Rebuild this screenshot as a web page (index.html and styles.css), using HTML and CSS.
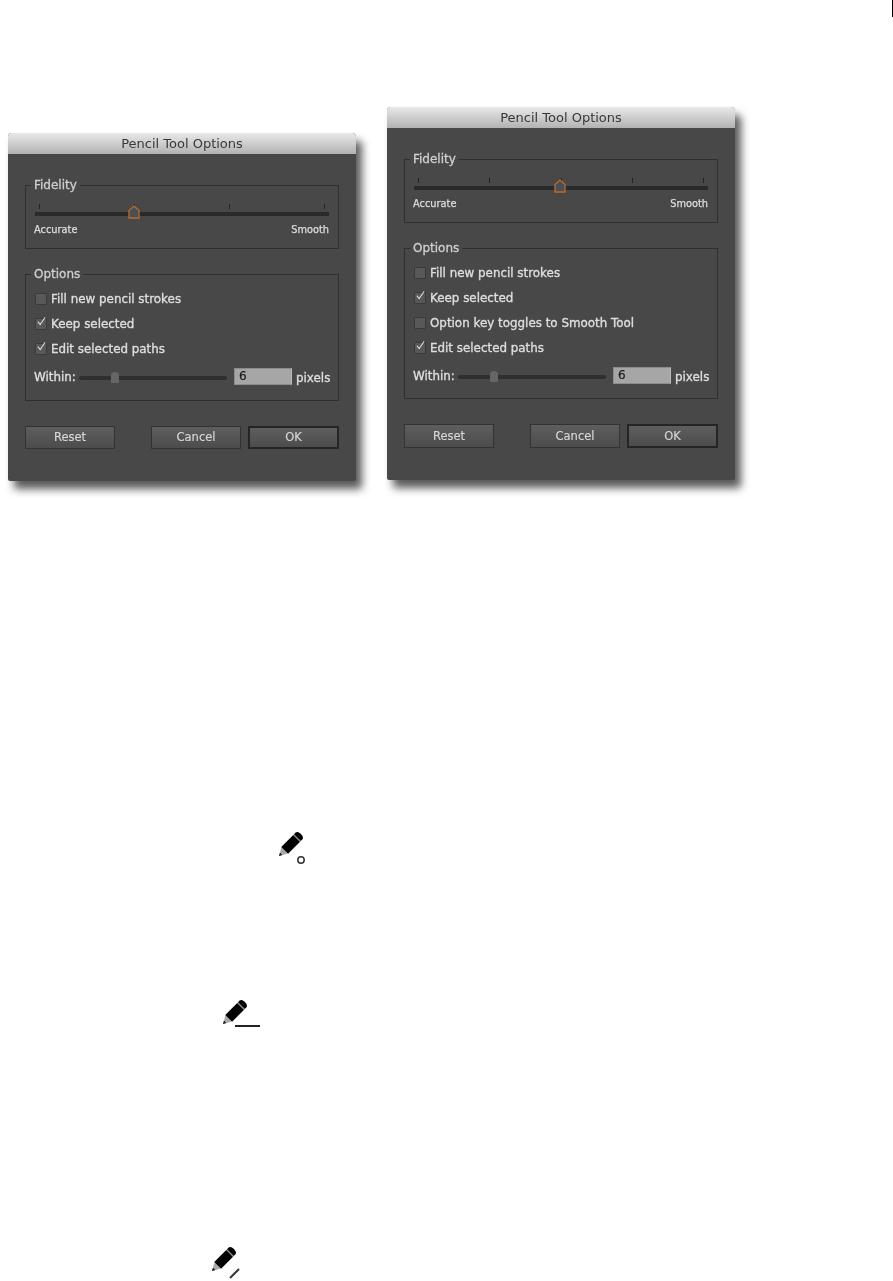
FILE: index.html
```html
<!DOCTYPE html>
<html lang="en">
<head>
    <meta charset="UTF-8">
    <meta name="viewport" content="width=device-width, initial-scale=1.0">
    <title>Pencil Tool Options</title>
    <link rel="stylesheet" href="styles.css">
</head>
<body>
    <div class="page-mark"></div>

    <svg class="defs" width="0" height="0">
        <symbol id="pencil" viewBox="0 0 30 30">
            <g transform="translate(1 25) rotate(-45)">
                <path d="M0 0 L8 -4.5 L8 4.5 Z" fill="#a8a8a8"/>
                <path d="M0 0 L3 -1.7 L3 1.7 Z" fill="#111"/>
                <rect x="8" y="-4.8" width="17" height="9.6" fill="#000"/>
                <rect x="25" y="-4.8" width="1" height="9.6" fill="#888"/>
                <path d="M26 -4.8 H28 Q31 -4.8 31 0 Q31 4.8 28 4.8 H26 Z" fill="#000"/>
            </g>
        </symbol>
    </svg>

    <div class="dialogs">
        <div class="dialog dialog-short">
            <div class="title">Pencil Tool Options</div>
            <div class="dialog-body">
                <fieldset class="group group-fidelity">
                    <legend>Fidelity</legend>
                    <div class="fidelity">
                        <div class="ticks"><i></i><i></i><i></i><i></i></div>
                        <div class="track"></div>
                        <svg class="thumb" style="left: 93px" width="12" height="14" viewBox="0 0 12 14">
                            <path d="M6 1 L11 5.5 V13 H1 V5.5 Z" fill="#46505c" stroke="#c06a20" stroke-width="1.3"/>
                        </svg>
                        <div class="ends"><span>Accurate</span><span>Smooth</span></div>
                    </div>
                </fieldset>

                <fieldset class="group group-options">
                    <legend>Options</legend>
                    <div class="option"><span class="check"></span>Fill new pencil strokes</div>
                    <div class="option"><span class="check checked"></span>Keep selected</div>
                    <div class="option"><span class="check checked"></span>Edit selected paths</div>
                    <div class="within">
                        <span class="within-label">Within:</span>
                        <div class="mini-slider"><span class="mini-thumb"></span></div>
                        <div class="num">6</div>
                        <span class="unit">pixels</span>
                    </div>
                </fieldset>

                <div class="buttons">
                    <div class="btn">Reset</div>
                    <div class="btn btn-cancel">Cancel</div>
                    <div class="btn btn-ok">OK</div>
                </div>
            </div>
        </div>

        <div class="dialog dialog-tall">
            <div class="title">Pencil Tool Options</div>
            <div class="dialog-body">
                <fieldset class="group group-fidelity">
                    <legend>Fidelity</legend>
                    <div class="fidelity">
                        <div class="ticks"><i></i><i></i><i></i><i></i><i></i></div>
                        <div class="track"></div>
                        <svg class="thumb" style="left: 140px" width="12" height="14" viewBox="0 0 12 14">
                            <path d="M6 1 L11 5.5 V13 H1 V5.5 Z" fill="#46505c" stroke="#c06a20" stroke-width="1.3"/>
                        </svg>
                        <div class="ends"><span>Accurate</span><span>Smooth</span></div>
                    </div>
                </fieldset>

                <fieldset class="group group-options">
                    <legend>Options</legend>
                    <div class="option"><span class="check"></span>Fill new pencil strokes</div>
                    <div class="option"><span class="check checked"></span>Keep selected</div>
                    <div class="option"><span class="check"></span>Option key toggles to Smooth Tool</div>
                    <div class="option"><span class="check checked"></span>Edit selected paths</div>
                    <div class="within">
                        <span class="within-label">Within:</span>
                        <div class="mini-slider"><span class="mini-thumb"></span></div>
                        <div class="num">6</div>
                        <span class="unit">pixels</span>
                    </div>
                </fieldset>

                <div class="buttons">
                    <div class="btn">Reset</div>
                    <div class="btn btn-cancel">Cancel</div>
                    <div class="btn btn-ok">OK</div>
                </div>
            </div>
        </div>
    </div>

    <svg class="cursor cursor-circle" width="30" height="36" viewBox="0 0 30 36">
        <use href="#pencil" width="30" height="30"/>
        <circle cx="23" cy="29" r="3.2" fill="none" stroke="#333" stroke-width="1.5"/>
    </svg>

    <svg class="cursor cursor-line" width="42" height="30" viewBox="0 0 42 30">
        <use href="#pencil" width="30" height="30"/>
        <rect x="13" y="26" width="25" height="2" fill="#222"/>
    </svg>

    <svg class="cursor cursor-slash" width="32" height="34" viewBox="0 0 32 34">
        <use href="#pencil" width="30" height="30"/>
        <path d="M19 32 L28 23" stroke="#333" stroke-width="2"/>
    </svg>
</body>
</html>
```

FILE: styles.css
```css
body {
    margin: 0;
    background: #fff;
    font-family: "DejaVu Sans", sans-serif;
    overflow: hidden;
}
.defs {
    display: block;
}
.page-mark {
    width: 1px;
    height: 17px;
    margin-left: auto;
    background: #000;
}
.dialogs {
    display: flex;
    align-items: flex-start;
    gap: 31px;
    margin-top: 90px;
    padding-left: 8px;
}
.dialog {
    width: 348px;
    background: #484848;
    border-radius: 4px 4px 2px 2px;
    box-shadow: 6px 8px 8px rgba(0, 0, 0, 0.65);
    filter: blur(0.4px);
    color: #dedede;
    font-size: 11.9px;
    -webkit-text-stroke: 0.35px #dedede;
}
.dialog-short {
    height: 348px;
    margin-top: 26px;
}
.dialog-tall {
    height: 373px;
}
.title {
    height: 21px;
    line-height: 21px;
    text-align: center;
    font-size: 13px;
    color: #383838;
    -webkit-text-stroke: 0;
    background: linear-gradient(#e9e9e9, #b2b2b2);
    border-radius: 4px 4px 0 0;
}
.dialog-body {
    padding: 24px 17px 0;
}
.group {
    margin: 0;
    padding: 0 9px;
    border: 1px solid #2f2f2f;
    min-width: 0;
}
.group legend {
    height: 14px;
    line-height: 14px;
    padding: 0 3px;
    margin-left: -4px;
    font-size: 12px;
    color: #d0d0d0;
    -webkit-text-stroke: 0.3px #d0d0d0;
}
.group-fidelity {
    height: 71px;
    box-sizing: border-box;
}
.group-options {
    margin-top: 18px;
    padding-top: 5px;
    padding-bottom: 15px;
}
.dialog-tall .group-options {
    padding-bottom: 14px;
}
.fidelity {
    position: relative;
    padding-top: 12px;
}
.ticks {
    display: flex;
    justify-content: space-between;
    padding: 0 4px;
    height: 5px;
}
.ticks i {
    width: 1px;
    background: #222;
}
.track {
    height: 4px;
    margin-top: 3px;
    background: #2a2a2a;
}
.thumb {
    position: absolute;
    top: 13px;
}
.ends {
    display: flex;
    justify-content: space-between;
    margin: 7px 0 0 -1px;
    font-size: 9.8px;
    line-height: 13px;
    -webkit-text-stroke: 0.25px #dedede;
}
.option {
    display: flex;
    align-items: center;
    height: 25px;
}
.check {
    position: relative;
    box-sizing: border-box;
    width: 12px;
    height: 12px;
    margin-right: 4px;
    background: #585858;
    border: 1px solid #3a3a3a;
    border-radius: 1px;
}
.checked::after {
    content: "";
    position: absolute;
    left: 1px;
    top: -1px;
    width: 8px;
    height: 3px;
    border-left: 1.5px solid #e4e4e4;
    border-bottom: 1.5px solid #e4e4e4;
    transform: rotate(-55deg) skewX(-14deg);
}
.within {
    display: flex;
    align-items: center;
    height: 17px;
    margin-top: 7px;
    margin-left: -1px;
}
.within-label {
    flex: none;
    width: 45px;
}
.mini-slider {
    flex: none;
    position: relative;
    width: 148px;
    height: 4px;
    margin-top: 2px;
    background: #2f2f2f;
    border-radius: 2px;
}
.mini-thumb {
    position: absolute;
    left: 32px;
    top: -4px;
    width: 8px;
    height: 11px;
    background: #666;
    border-radius: 4px 4px 1px 1px;
}
.num {
    flex: none;
    box-sizing: border-box;
    width: 58px;
    height: 17px;
    line-height: 15px;
    margin-left: 7px;
    padding-left: 4px;
    font-size: 12px;
    background: #a6a6a6;
    color: #1a1a1a;
    -webkit-text-stroke: 0.2px #1a1a1a;
    border: 1px solid #8c8c8c;
    border-right-color: #b8b8b8;
}
.unit {
    flex: none;
    margin-left: 4px;
    padding-top: 3px;
}
.buttons {
    display: flex;
    margin-top: 25px;
}
.btn {
    box-sizing: border-box;
    width: 90px;
    height: 23px;
    line-height: 21px;
    text-align: center;
    font-size: 11.5px;
    color: #d8d8d8;
    -webkit-text-stroke: 0.15px #d8d8d8;
    background: linear-gradient(#5e5e5e, #4c4c4c);
    border: 1px solid #333;
}
.dialog-tall .btn {
    height: 24px;
    line-height: 22px;
}
.btn-cancel {
    margin-left: 36px;
}
.btn-ok {
    width: 91px;
    margin-left: 7px;
    border: 2px solid #252525;
    line-height: 19px;
}
.dialog-tall .btn-ok {
    line-height: 20px;
}
.cursor {
    display: block;
    filter: blur(0.7px);
}
.cursor-circle {
    margin: 350px 0 0 278px;
}
.cursor-line {
    margin: 132px 0 0 222px;
}
.cursor-slash {
    margin: 217px 0 0 211px;
}
```
